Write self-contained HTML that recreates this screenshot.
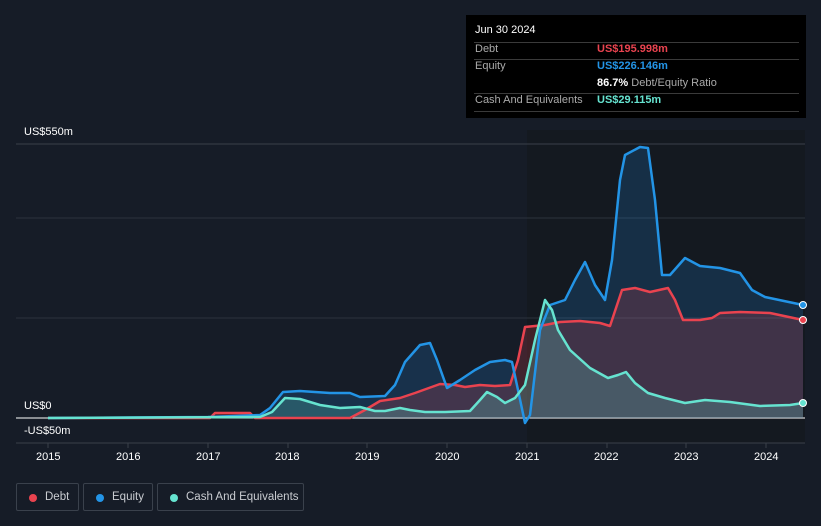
<!DOCTYPE html><html><head><style>
body{margin:0;width:821px;height:526px;background:#161c27;font-family:"Liberation Sans",sans-serif;overflow:hidden;position:relative}
.t{position:absolute;color:#fff;font-size:11px}
.tip{position:absolute;left:466px;top:15px;width:340px;height:103px;background:#000;}
.tip div{position:absolute;font-size:11px;white-space:nowrap}
.ln{position:absolute;left:8px;width:325px;height:1px;background:#3a3a3a}
.lg{position:absolute;top:483px;height:28px;border:1px solid #3a414c;border-radius:2px;color:#c9ccd1;font-size:11.5px;line-height:26px;box-sizing:border-box;white-space:nowrap}
.lg i{position:absolute;left:12px;top:10px;width:8px;height:8px;border-radius:50%}
</style></head><body>
<svg width="821" height="526" style="position:absolute;left:0;top:0">
<rect x="527" y="130" width="278" height="313" fill="#141920"/>
<line x1="16" y1="144" x2="805" y2="144" stroke="#3a404a"/>
<line x1="16" y1="218" x2="805" y2="218" stroke="#2c323c"/>
<line x1="16" y1="318" x2="805" y2="318" stroke="#2c323c"/>
<line x1="16" y1="443" x2="805" y2="443" stroke="#3a404a"/>
<line x1="16" y1="418" x2="805" y2="418" stroke="#fff" stroke-width="1"/>
<g stroke="#3a404a"><line x1="48" y1="443" x2="48" y2="448"/><line x1="128" y1="443" x2="128" y2="448"/><line x1="208" y1="443" x2="208" y2="448"/><line x1="288" y1="443" x2="288" y2="448"/><line x1="367" y1="443" x2="367" y2="448"/><line x1="447" y1="443" x2="447" y2="448"/><line x1="527" y1="443" x2="527" y2="448"/><line x1="607" y1="443" x2="607" y2="448"/><line x1="686" y1="443" x2="686" y2="448"/><line x1="766" y1="443" x2="766" y2="448"/></g>
<polygon fill="rgba(33,150,243,0.18)" points="48,418 208,417 260,415 270,408 283,392 300,391 330,393 350,393 360,397 385,396 395,385 405,362 420,345 430,343 437,360 447,388 460,380 475,370 490,362 505,360 512,362 518,390 525,420 530,415 540,330 550,305 565,300 575,280 585,262 595,285 605,300 612,260 620,180 625,155 640,147 648,148 655,200 662,275 670,275 685,258 700,266 720,268 740,273 752,290 765,297 803,305 803,418"/>
<polygon fill="rgba(233,69,80,0.2)" points="48,418 210,418 215,413 250,413 255,418 350,418 365,410 380,401 400,398 415,393 440,384 455,385 465,387 480,385 495,386 510,385 518,360 525,327 545,325 560,322 580,321 600,323 610,326 622,290 635,288 650,292 668,288 675,300 683,320 700,320 712,318 720,313 740,312 770,313 803,320 803,418"/>
<polygon fill="rgba(102,227,208,0.22)" points="48,418 260,417 272,412 285,398 300,399 320,405 340,408 360,407 375,411 385,411 400,408 410,410 425,412 445,412 470,411 480,400 487,392 497,397 505,403 515,398 525,385 535,340 545,300 552,310 558,330 570,350 590,368 608,378 618,375 626,372 635,383 648,393 665,398 685,403 705,400 730,402 760,406 790,405 803,403 803,418"/>
<g fill="none" stroke-width="2.5" stroke-linejoin="round">
<polyline stroke="#e9434f" points="48,418 210,418 215,413 250,413 255,418 350,418 365,410 380,401 400,398 415,393 440,384 455,385 465,387 480,385 495,386 510,385 518,360 525,327 545,325 560,322 580,321 600,323 610,326 622,290 635,288 650,292 668,288 675,300 683,320 700,320 712,318 720,313 740,312 770,313 803,320"/>
<polyline stroke="#2394e6" points="48,418 208,417 260,415 270,408 283,392 300,391 330,393 350,393 360,397 385,396 395,385 405,362 420,345 430,343 437,360 447,388 460,380 475,370 490,362 505,360 512,362 518,390 525,423 530,415 540,330 550,305 565,300 575,280 585,262 595,285 605,300 612,260 620,180 625,155 640,147 648,148 655,200 662,275 670,275 685,258 700,266 720,268 740,273 752,290 765,297 803,305"/>
<polyline stroke="#66e3d0" points="48,418 260,417 272,412 285,398 300,399 320,405 340,408 360,407 375,411 385,411 400,408 410,410 425,412 445,412 470,411 480,400 487,392 497,397 505,403 515,398 525,385 535,340 545,300 552,310 558,330 570,350 590,368 608,378 618,375 626,372 635,383 648,393 665,398 685,403 705,400 730,402 760,406 790,405 803,403"/>
</g>
<circle cx="803" cy="305" r="3.5" fill="#2394e6" stroke="#fff" stroke-width="1"/>
<circle cx="803" cy="320" r="3.5" fill="#e9434f" stroke="#fff" stroke-width="1"/>
<circle cx="803" cy="403" r="3.5" fill="#66e3d0" stroke="#fff" stroke-width="1"/>
</svg>
<div class="t" style="left:24px;top:126px">US$550m</div>
<div class="t" style="left:24px;top:400px">US$0</div>
<div class="t" style="left:24px;top:425px">-US$50m</div>
<div class="t" style="left:36px;top:451px">2015</div><div class="t" style="left:116px;top:451px">2016</div><div class="t" style="left:196px;top:451px">2017</div><div class="t" style="left:275px;top:451px">2018</div><div class="t" style="left:355px;top:451px">2019</div><div class="t" style="left:435px;top:451px">2020</div><div class="t" style="left:515px;top:451px">2021</div><div class="t" style="left:594px;top:451px">2022</div><div class="t" style="left:674px;top:451px">2023</div><div class="t" style="left:754px;top:451px">2024</div>
<div class="tip">
<div style="left:9px;top:9px;color:#fff">Jun 30 2024</div>
<div class="ln" style="top:27px"></div>
<div style="left:9px;top:28px;color:#aaa">Debt</div><div style="left:131px;top:28px;color:#e9434f;font-weight:bold">US$195.998m</div>
<div class="ln" style="top:44px"></div>
<div style="left:9px;top:45px;color:#aaa">Equity</div><div style="left:131px;top:45px;color:#2394e6;font-weight:bold">US$226.146m</div>
<div style="left:131px;top:62px;color:#fff"><b>86.7%</b> <span style="color:#aaa">Debt/Equity Ratio</span></div>
<div class="ln" style="top:78px"></div>
<div style="left:9px;top:79px;color:#aaa">Cash And Equivalents</div><div style="left:131px;top:79px;color:#66e3d0;font-weight:bold">US$29.115m</div>
<div class="ln" style="top:96px"></div>
</div>
<div class="lg" style="left:16px;width:63px"><i style="background:#e9434f"></i><span style="position:absolute;left:28px">Debt</span></div>
<div class="lg" style="left:83px;width:70px"><i style="background:#2394e6"></i><span style="position:absolute;left:28px">Equity</span></div>
<div class="lg" style="left:157px;width:147px"><i style="background:#66e3d0"></i><span style="position:absolute;left:28px">Cash And Equivalents</span></div>
</body></html>
